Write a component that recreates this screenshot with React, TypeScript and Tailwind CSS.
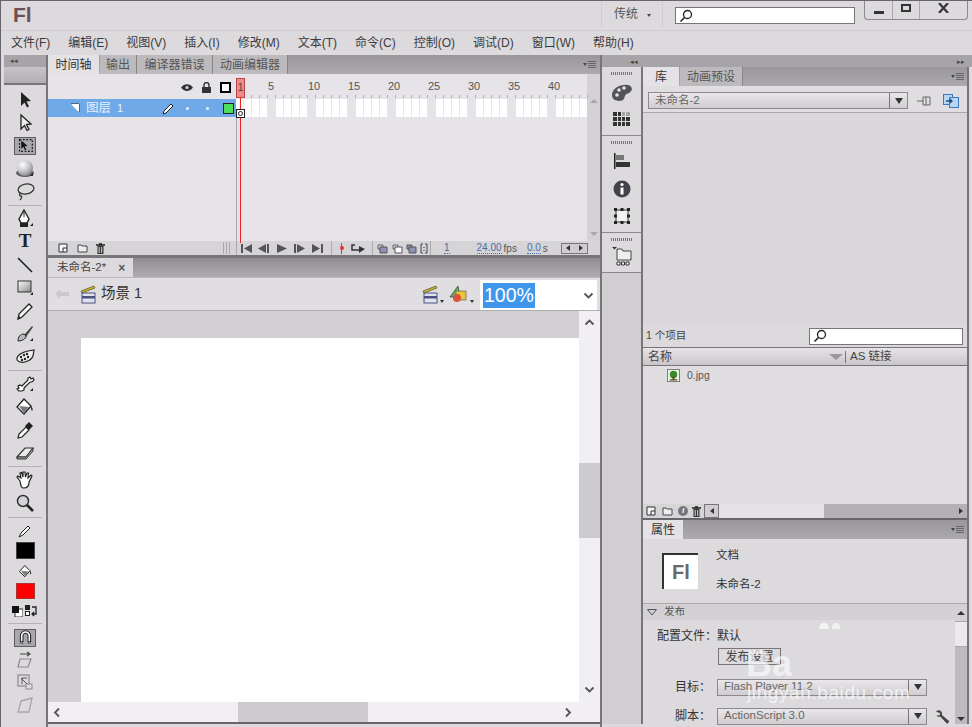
import React from 'react';

const menus = ['文件(F)', '编辑(E)', '视图(V)', '插入(I)', '修改(M)', '文本(T)', '命令(C)', '控制(O)', '调试(D)', '窗口(W)', '帮助(H)'];
const rulerLabels: Record<number, string> = { 1: '1', 5: '5', 10: '10', 15: '15', 20: '20', 25: '25', 30: '30', 35: '35', 40: '40' };
const frames = Array.from({ length: 44 }, (_, i) => i + 1);

const Icon = ({ size = 20, children }: { size?: number; children: React.ReactNode }) => (
  <svg width={size} height={size} viewBox="0 0 20 20" className="shrink-0">{children}</svg>
);

const Corner = () => <path d="M15 17l3 0 0-3z" fill="#222" />;

const toolIcons: Record<string, React.ReactNode> = {
  arrow: <path d="M6 2l0 14 3.5-3.5 2.500 5 2-1-2.500-5 4.500-.5z" fill="#222" />,
  sub: <path d="M6 2l0 14 3.5-3.5 2.500 5 2-1-2.500-5 4.500-.5z" fill="#eee" stroke="#222" strokeWidth="1.3" />,
  free: (
    <>
      <rect x="3" y="3" width="15" height="14" fill="none" stroke="#111" strokeWidth="1.4" strokeDasharray="2 2" />
      <path d="M5 4l0 10 2.500-2.500 2 4 1.500-.8-2-3.800 3.500-.3z" fill="#111" />
    </>
  ),
  sphere: (
    <>
      <defs>
        <radialGradient id="sg" cx=".35" cy=".3" r=".8">
          <stop offset="0" stopColor="#fff" />
          <stop offset=".6" stopColor="#bdbbbf" />
          <stop offset="1" stopColor="#77757a" />
        </radialGradient>
      </defs>
      <ellipse cx="10" cy="14" rx="9" ry="4" fill="#5f5d62" />
      <circle cx="10" cy="9" r="8" fill="url(#sg)" />
      <Corner />
    </>
  ),
  lasso: (
    <>
      <ellipse cx="11" cy="7" rx="8" ry="5" fill="none" stroke="#333" strokeWidth="1.3" transform="rotate(-10 11 7)" />
      <path d="M6 11c-2 1-2 3 0 3 1 0 1 2-1 4" fill="none" stroke="#333" strokeWidth="1.3" />
    </>
  ),
  pen: (
    <>
      <path d="M9 1l5 9-2 4H6l-2-4z" fill="#fff" stroke="#222" strokeWidth="1.4" />
      <path d="M9 2v6" stroke="#222" />
      <rect x="5" y="14" width="8" height="4" fill="#222" />
      <Corner />
    </>
  ),
  line: <path d="M3 3l14 14" stroke="#222" strokeWidth="1.6" />,
  rect: (
    <>
      <defs>
        <linearGradient id="rg" x1="0" y1="0" x2="1" y2="1">
          <stop offset="0" stopColor="#fff" />
          <stop offset="1" stopColor="#8b898d" />
        </linearGradient>
      </defs>
      <rect x="3" y="3" width="13" height="11" fill="url(#rg)" stroke="#333" />
      <Corner />
    </>
  ),
  pencil: (
    <>
      <path d="M3 18l1-5L14 3l3 3L7 16z" fill="#fff" stroke="#222" strokeWidth="1.3" />
      <path d="M3 18l1-3 2 2z" fill="#222" />
    </>
  ),
  brush: (
    <>
      <path d="M9 11L17 2l1 1-7 10z" fill="#444" />
      <path d="M9 10c-4 0-6 3-6 7 4 0 8-2 8-5z" fill="#b9b7ba" stroke="#222" />
      <Corner />
    </>
  ),
  deco: (
    <>
      <path d="M2 13C1 8 8 5 13 4l6-1-1 6c-2 5-12 9-16 4z" fill="#eee" stroke="#222" strokeWidth="1.2" />
      <g fill="#222">
        <circle cx="6" cy="10" r="1.200" />
        <circle cx="9" cy="8" r="1.200" />
        <circle cx="12" cy="7" r="1.200" />
        <circle cx="7" cy="13" r="1.200" />
        <circle cx="10" cy="12" r="1.200" />
        <circle cx="13" cy="10" r="1.200" />
      </g>
    </>
  ),
  bone: (
    <>
      <path d="M4 17l-2-2 2-1-1-2 2-1 2 1 6-6V4l2-1 1 2 2-1 1 2-2 2-2 0-6 6v2l-2 1z" fill="#fff" stroke="#222" strokeWidth="1.2" />
      <path d="M15 17l3 0 0-3z" fill="#222" />
    </>
  ),
  bucket: (
    <>
      <path d="M9 2l7 7-7 8-7-7z" fill="#fff" stroke="#222" strokeWidth="1.3" />
      <path d="M4 9l10 1-5 6z" fill="#7b797d" />
      <path d="M16 9c2 2 2 4 1 5-1-1-1-3-1-5z" fill="#222" />
    </>
  ),
  dropper: (
    <>
      <path d="M3 18l1-4 7-7 3 3-7 7z" fill="#fff" stroke="#222" strokeWidth="1.2" />
      <path d="M10 6l4-4 4 4-4 4z" fill="#222" />
    </>
  ),
  eraser: (
    <>
      <path d="M2 14l8-9h8l-7 9z" fill="#e8e7e9" stroke="#333" strokeWidth="1.2" />
      <path d="M2 14v2h9l7-8V5l-7 9z" fill="#a8a6aa" stroke="#333" />
    </>
  ),
  hand: (
    <path d="M5 11L2 7l1-1 3 2-1-5 1.500-.5L8 7V2h2l.5 5L12 3h1.500l-.5 5 3-3 1 1-3 6c0 4-2 6-5 6-3 0-3-2-4-7z" fill="#fff" stroke="#222" strokeWidth="1.2" />
  ),
  zoom: (
    <>
      <circle cx="8" cy="8" r="5.500" fill="#d5d3d7" stroke="#333" strokeWidth="1.5" />
      <path d="M12 12l6 6" stroke="#222" strokeWidth="2.6" />
    </>
  ),
  magnet: (
    <>
      <path d="M4 15V8a6 6 0 0 1 12 0v7h-3V8a3 3 0 0 0-6 0v7z" fill="#fff" stroke="#222" strokeWidth="1.2" />
      <path d="M4 17h3M13 17h3" stroke="#222" strokeDasharray="1 1" />
    </>
  ),
  smooth: (
    <>
      <path d="M5 9h11l-3 8H3z" fill="none" stroke="#8b898d" strokeWidth="1.2" />
      <path d="M5 4h10m-3-2l3 2-3 2" fill="none" stroke="#444" strokeWidth="1.1" />
    </>
  ),
  scale: (
    <>
      <rect x="3" y="3" width="11" height="11" fill="none" stroke="#8b898d" strokeWidth="1.2" />
      <rect x="11" y="12" width="6" height="5" fill="#dcdadd" stroke="#8b898d" />
      <path d="M6 6l6 6m-5 0V6h5" fill="none" stroke="#555" />
    </>
  ),
  rotate: <path d="M6 6l11-3-3 14H3z" fill="none" stroke="#a8a6aa" strokeWidth="1.3" />,
};

const Tool = ({ name, active, h = 23 }: { name: string; active?: boolean; h?: number }) => (
  <div className="flex items-center justify-center" style={{ height: h }}>
    <div className={`flex h-[18px] w-[22px] items-center justify-center ${active ? 'border border-[#5f5d61] bg-[#a9a7ab]' : ''}`}>
      <Icon size={name === 'free' || name === 'magnet' ? 17 : 20}>{toolIcons[name]}</Icon>
    </div>
  </div>
);

const Sep = ({ h = 4 }: { h?: number }) => (
  <div className="flex items-center" style={{ height: h }}>
    <div className="h-px w-full bg-[#b4b2b6]" />
  </div>
);

const PanelMenu = () => (
  <div className="flex items-center gap-px">
    <div className="h-0 w-0 border-x-[2px] border-t-[3px] border-x-transparent border-t-[#444]" />
    <div className="flex w-[8px] flex-col gap-px">
      <div className="h-px bg-[#666]" />
      <div className="h-px bg-[#666]" />
      <div className="h-px bg-[#666]" />
      <div className="h-px bg-[#666]" />
    </div>
  </div>
);

const Search = ({ className }: { className: string }) => (
  <div className={`flex items-center border border-[#77757a] bg-white pl-[3px] ${className}`}>
    <svg width="14" height="14" viewBox="0 0 14 14">
      <circle cx="8.500" cy="5.500" r="4" fill="none" stroke="#222" strokeWidth="1.3" />
      <path d="M5.500 8.500L1.500 12.500" stroke="#222" strokeWidth="1.6" />
    </svg>
  </div>
);

const DropArrow = () => <div className="h-0 w-0 border-x-[4px] border-t-[6px] border-x-transparent border-t-[#333]" />;

const Combo = ({ text, className }: { text: string; className: string }) => (
  <div className={`flex h-[17px] items-center border border-[#8b898d] bg-linear-to-b from-[#e9e7ea] to-[#cfcdd0] ${className}`}>
    <span className="flex-1 truncate pl-[6px] text-[11.5px] text-[#666]">{text}</span>
    <div className="flex h-full w-[18px] items-center justify-center border-l border-[#77757a]">
      <DropArrow />
    </div>
  </div>
);

const TreeIcon = ({ size = 13 }: { size?: number }) => (
  <svg width={size} height={size} viewBox="0 0 14 14">
    <rect x=".5" y=".5" width="13" height="13" fill="#e9f3df" stroke="#777" />
    <circle cx="7" cy="6" r="4" fill="#3d8a2e" />
    <path d="M6 8h2v3H6zM3 11h8v1.500H3z" fill="#5a4a2a" />
  </svg>
);

const NewLayer = () => (
  <svg width="10" height="10" viewBox="0 0 10 10">
    <path d="M1 1h8v8H1z" fill="#f4f4f4" stroke="#333" />
    <path d="M5 9V5h4" fill="none" stroke="#333" />
  </svg>
);
const FolderSmall = () => (
  <svg width="11" height="10" viewBox="0 0 11 10">
    <path d="M1 9V2h3l1 1h5v6z" fill="#eee" stroke="#444" />
  </svg>
);
const Trash = () => (
  <svg width="9" height="11" viewBox="0 0 9 11">
    <path d="M0 2h9M3 1h3" stroke="#222" strokeWidth="1.3" />
    <path d="M1.500 3h6v8h-6z" fill="#333" />
    <path d="M3.200 4v6M5.700 4v6" stroke="#ddd" />
  </svg>
);

const Clapper = () => (
  <svg width="17" height="19" viewBox="0 0 17 19">
    <path d="M1 6l13-5 1 2L2 8z" fill="#c4b52f" stroke="#5a5320" strokeWidth=".7" />
    <rect x="2" y="8" width="13" height="10" fill="#dfe3ef" stroke="#4a5280" />
    <rect x="2" y="11" width="13" height="2.500" fill="#4a5280" />
  </svg>
);

const PlayBtn = ({ d, ml }: { d: string; ml: string }) => (
  <svg width="11" height="9" viewBox="0 0 11 9" className={ml}>
    <path d={d} fill="#55535a" />
  </svg>
);

const Chevron = ({ d, className }: { d: string; className: string }) => (
  <svg width="11" height="11" viewBox="0 0 11 11" className={className}>
    <path d={d} fill="none" stroke="#55535a" strokeWidth="1.8" />
  </svg>
);

const DockSection = ({ h, children }: { h: number; children: React.ReactNode }) => (
  <div className="flex flex-col items-center border-b border-[#8b898d] pt-[5px]" style={{ height: h }}>
    <div className="mb-[3px] h-[3px] w-[22px] bg-[repeating-linear-gradient(90deg,#77757a_0,#77757a_1px,transparent_1px,transparent_2px)]" />
    {children}
  </div>
);

export default function App() {
  return (
    <div className="relative flex h-[727px] w-[972px] flex-col overflow-hidden border-t border-l border-[#68666c] bg-[#dcdadd] font-['Liberation_Sans','Noto_Sans_CJK_SC',sans-serif] text-[#3c3a3e]">
      {/* タイトルバー */}
      <div className="flex h-[30px] shrink-0 items-start border-b border-[#cfcdd0]">
        <span className="ml-[12px] mt-[2px] text-[21px] leading-[24px] font-bold text-[#6f4f55]">Fl</span>
        <div className="ml-auto flex h-[26px] items-center border-x border-[#cfcdd0] pl-[12px] pr-[11px]">
          <span className="text-[12px] text-[#555]">传统</span>
          <div className="ml-[9px] mt-[2px] h-0 w-0 border-x-[2.5px] border-t-[3px] border-x-transparent border-t-[#444]" />
        </div>
        <Search className="ml-[12px] mt-[6px] h-[17px] w-[180px]" />
        <div className="ml-[9px] mr-[4px] flex h-[19px] w-[104px] rounded-b-[4px] border border-t-0 border-[#8b898d]">
          <div className="flex w-[28px] items-end justify-center border-r border-[#aaa8ac] pb-[5px]">
            <div className="h-[3px] w-[10px] bg-[#333]" />
          </div>
          <div className="flex w-[27px] items-center justify-center border-r border-[#aaa8ac]">
            <div className="mb-[4px] h-[8px] w-[10px] border-2 border-[#333]" />
          </div>
          <div className="flex flex-1 items-center justify-center">
            <svg width="11" height="10" viewBox="0 0 11 10" className="mb-[4px]">
              <path d="M1 0l9 10M10 0L1 10" stroke="#333" strokeWidth="2.2" />
            </svg>
          </div>
        </div>
      </div>

      {/* メニュー */}
      <div className="flex h-[24px] shrink-0 items-center gap-[18px] pl-[10px] text-[12px] text-[#3c3a3e]">
        {menus.map((m) => (
          <span key={m} className="whitespace-nowrap">{m}</span>
        ))}
      </div>

      <div className="flex min-h-0 flex-1">
        {/* ツールバー */}
        <div className="flex w-[47px] shrink-0 flex-col border-r-2 border-[#77757a] pl-[3px]">
          <div className="h-[12px] bg-[#a6a4a8] pl-[6px] text-[7px] leading-[11px] text-[#444]">◂◂</div>
          <div className="h-[16px] bg-linear-to-b from-[#c6c4c7] to-[#b0aeb2]" />
          <div className="flex-1 border-t-2 border-[#77757a] bg-[#dcdadd] px-[4px] pt-[3px]">
            <Tool name="arrow" />
            <Tool name="sub" />
            <Tool name="free" active />
            <Tool name="sphere" />
            <Tool name="lasso" />
            <Sep />
            <Tool name="pen" />
            <div className="flex h-[23px] items-center justify-center font-['Liberation_Serif',serif] text-[19px] font-bold text-[#222]">T</div>
            <Tool name="line" />
            <Tool name="rect" />
            <Tool name="pencil" />
            <Tool name="brush" />
            <Tool name="deco" />
            <Sep />
            <Tool name="bone" />
            <Tool name="bucket" />
            <Tool name="dropper" />
            <Tool name="eraser" />
            <Sep />
            <Tool name="hand" />
            <Tool name="zoom" />
            <Sep h={6} />
            <div className="flex h-[22px] items-center justify-center">
              <svg width="14" height="14" viewBox="0 0 14 14">
                <path d="M1 13l2-4 7-7 2 2-7 7z" fill="#fff" stroke="#222" />
              </svg>
            </div>
            <div className="mx-auto h-[17px] w-[19px] border border-[#444] bg-black" />
            <div className="flex h-[24px] items-center justify-center">
              <Icon size={15}>{toolIcons.bucket}</Icon>
            </div>
            <div className="mx-auto h-[16px] w-[19px] border border-[#a33] bg-[#f00]" />
            <div className="flex h-[21px] items-center justify-center gap-[2px] pt-[3px]">
              <svg width="11" height="11" viewBox="0 0 11 11">
                <rect x="3" y="3" width="8" height="8" fill="#fff" stroke="#333" />
                <rect width="7" height="7" fill="#111" />
              </svg>
              <svg width="13" height="12" viewBox="0 0 13 12">
                <rect width="5" height="5" fill="#222" />
                <rect x=".5" y="6.500" width="4" height="4" fill="#fff" stroke="#222" />
                <path d="M7 2h4v7H7m2-2l-2 2 2 2" fill="none" stroke="#222" strokeWidth="1.3" />
              </svg>
            </div>
            <Sep h={6} />
            <Tool name="magnet" active />
            <Tool name="smooth" h={21} />
            <Tool name="scale" />
            <Tool name="rotate" />
          </div>
        </div>

        {/* 中央 */}
        <div className="flex w-[552px] shrink-0 flex-col">
          <div className="flex h-[19px] shrink-0 items-stretch bg-linear-to-b from-[#99979b] to-[#acaaae] pr-[4px] text-[12px]">
            <div className="flex w-[51px] items-center justify-center bg-[#e4e2e5] text-[#333]">时间轴</div>
            <div className="ml-[1px] flex w-[37px] items-center justify-center border-r border-[#88868a] bg-[#bcbabd] text-[#555]">输出</div>
            <div className="flex w-[76px] items-center justify-center border-r border-[#88868a] bg-[#bcbabd] text-[#555]">编译器错误</div>
            <div className="flex w-[75px] items-center justify-center border-r border-[#88868a] bg-[#bcbabd] text-[#555]">动画编辑器</div>
            <div className="ml-auto flex items-center">
              <PanelMenu />
            </div>
          </div>

          {/* タイムライン */}
          <div className="flex h-[181px] shrink-0 flex-col bg-[#e6e4e8]">
            <div className="flex min-h-0 flex-1">
              <div className="flex w-[539px] shrink-0 flex-col">
                <div className="relative flex h-[25px] shrink-0">
                  <div className="flex w-[188px] shrink-0 items-center justify-end pr-[5px] pt-[2px]">
                    <svg width="12" height="9" viewBox="0 0 12 9" className="mr-[9px]">
                      <path d="M0 4.500C3 0 9 0 12 4.500 9 9 3 9 0 4.500z" fill="#333" />
                      <circle cx="6" cy="4.500" r="1.500" fill="#ddd" />
                    </svg>
                    <svg width="9" height="11" viewBox="0 0 9 11" className="mr-[9px]">
                      <path d="M2 5V3a2.500 2.500 0 0 1 5 0v2" fill="none" stroke="#333" strokeWidth="1.4" />
                      <rect y="5" width="9" height="6" fill="#333" />
                    </svg>
                    <div className="h-[11px] w-[11px] border-2 border-black bg-white" />
                  </div>
                  <div className="flex items-end">
                    {frames.map((f) => (
                      <div key={f} className="relative flex h-full w-[8px] shrink-0 flex-col justify-end">
                        {rulerLabels[f] && f > 1 && (
                          <span className="absolute top-[6px] left-0 whitespace-nowrap text-[11px] leading-[13px] text-[#555]">{rulerLabels[f]}</span>
                        )}
                        <div className="mb-px ml-[7px] h-[3px] w-px bg-[#b0aeb2]" />
                      </div>
                    ))}
                  </div>
                </div>
                <div className="flex h-[18px] shrink-0">
                  <div className="flex w-[188px] shrink-0 items-center bg-[#6fa9e8] text-white">
                    <svg width="9" height="10" viewBox="0 0 9 10" className="ml-[23px]">
                      <path d="M0 1h8v8" fill="#fff" stroke="#222" />
                      <path d="M0 1l8 0 0 8z" fill="#fff" />
                    </svg>
                    <span className="ml-[6px] text-[12.5px] leading-none text-[#e6f1fb]">图层</span>
                    <span className="ml-[6px] text-[11px] leading-none text-[#e6f1fb]">1</span>
                    <svg width="13" height="13" viewBox="0 0 13 13" className="ml-[39px]">
                      <path d="M1 12l1-3 7-7 2 2-7 7z" fill="#fff" stroke="#222" />
                    </svg>
                    <div className="ml-[11px] h-[3px] w-[3px] rounded-full bg-[#e6f1fb]" />
                    <div className="ml-[17px] h-[3px] w-[3px] rounded-full bg-[#e6f1fb]" />
                    <div className="ml-[14px] h-[11px] w-[11px] border border-[#222] bg-[#4fdc5a]" />
                  </div>
                  <div className="flex">
                    {frames.map((f) => (
                      <div key={f} className={`h-full w-[8px] shrink-0 border-r border-[#e8e6ea] ${f % 5 === 0 ? 'bg-[#e6e4e8]' : 'bg-white'}`} />
                    ))}
                  </div>
                </div>
                <div className="w-[189px] flex-1 border-r border-[#a8a6aa]" />
              </div>
              <div className="flex w-[13px] shrink-0 flex-col items-center justify-between bg-[#d4d2d6] pt-[25px] pb-[5px]">
                <div className="h-0 w-0 border-x-[4px] border-b-[4px] border-x-transparent border-b-[#aaa8ac]" />
                <div className="h-0 w-0 border-x-[4px] border-t-[4px] border-x-transparent border-t-[#aaa8ac]" />
              </div>
            </div>
            <div className="flex h-[14px] shrink-0 items-center bg-[#d6d4d7] text-[10px]">
              <div className="ml-[10px]"><NewLayer /></div>
              <div className="ml-[9px]"><FolderSmall /></div>
              <div className="ml-[8px]"><Trash /></div>
              <div className="ml-[118px] h-[12px] w-[8px] bg-[repeating-linear-gradient(90deg,#aaa8ac_0,#aaa8ac_1px,transparent_1px,transparent_3px)]" />
              <div className="ml-[5px] h-full w-px bg-[#aaa8ac]" />
              <PlayBtn ml="ml-[4px]" d="M0 0h2v9H0zM11 0v9L3 4.500z" />
              <PlayBtn ml="ml-[6px]" d="M9 0h2v9H9zM8 0v9L0 4.500z" />
              <PlayBtn ml="ml-[7px]" d="M1 0l10 4.500L1 9z" />
              <PlayBtn ml="ml-[7px]" d="M0 0h2v9H0zM3 0l8 4.500L3 9z" />
              <PlayBtn ml="ml-[7px]" d="M9 0h2v9H9zM0 0l8 4.500L0 9z" />
              <div className="ml-[8px] mr-[6px] h-full w-px bg-[#aaa8ac]" />
              <div className="relative flex h-[11px] w-[7px] items-center justify-center">
                <div className="absolute h-full w-px bg-[#d33]" />
                <div className="h-[4px] w-[4px] rounded-full bg-[#d33]" />
              </div>
              <svg width="16" height="9" viewBox="0 0 16 9" className="ml-[5px]">
                <path d="M5 1H2v5h7" fill="none" stroke="#333" strokeWidth="1.5" />
                <path d="M9 2l6 3-6 4z" fill="#333" />
              </svg>
              <div className="ml-[6px] mr-[3px] h-full w-px bg-[#aaa8ac]" />
              <svg width="52" height="11" viewBox="0 0 52 11">
                <path d="M2 2h5v4H2z" fill="none" stroke="#666" />
                <path d="M4 4h7v6H4z" fill="#8f93b5" stroke="#555" />
                <path d="M17 2h5v4h-5z" fill="none" stroke="#666" />
                <path d="M19 4h7v6h-7z" fill="#fff" stroke="#555" />
                <path d="M31 2h5v4h-5z" fill="#8f93b5" stroke="#555" />
                <path d="M33 4h7v6h-7z" fill="#8f93b5" stroke="#555" />
                <path d="M47 1h-2v9h2M49 1h2v9h-2" fill="none" stroke="#444" />
                <path d="M48 4v1M48 7v1" stroke="#222" />
              </svg>
              <div className="ml-[2px] h-full w-px bg-[#aaa8ac]" />
              <span className="ml-[13px] border-b border-dotted border-[#4a6fa8] leading-[10px] text-[#4a6fa8]">1</span>
              <span className="ml-[27px] border-b border-dotted border-[#4a6fa8] leading-[10px] text-[#4a6fa8]">24.00</span>
              <span className="ml-[2px] text-[#555]">fps</span>
              <span className="ml-[10px] border-b border-dotted border-[#4a6fa8] leading-[10px] text-[#4a6fa8]">0.0</span>
              <span className="ml-[2px] text-[#555]">s</span>
              <div className="ml-[13px] flex h-[11px] w-[27px] items-center justify-between border border-[#77757a] bg-[#cfcdd0] px-[4px]">
                <div className="h-0 w-0 border-y-[3px] border-r-[4px] border-y-transparent border-r-[#333]" />
                <div className="h-0 w-0 border-y-[3px] border-l-[4px] border-y-transparent border-l-[#333]" />
              </div>
            </div>
          </div>

          <div className="h-[3px] shrink-0 bg-[#77757a]" />

          {/* ドキュメントタブ */}
          <div className="flex h-[19px] shrink-0 bg-linear-to-b from-[#8f8d91] to-[#aeacb0]">
            <div className="flex w-[85px] items-center bg-[#dcdadd] pl-[9px] text-[11.5px] text-[#444]">
              <span>未命名-2*</span>
              <span className="ml-[12px] text-[12px] leading-none font-bold text-[#555]">×</span>
            </div>
          </div>

          {/* シーンバー */}
          <div className="flex h-[34px] shrink-0 items-center border-t border-b border-t-[#b9b7ba] border-b-[#b0aeb2] bg-[#e0dee1]">
            <svg width="14" height="10" viewBox="0 0 14 10" className="ml-[7px]">
              <path d="M0 5l5-5v3h9v4H5v3z" fill="#cbc9cc" />
            </svg>
            <div className="ml-[11px]"><Clapper /></div>
            <span className="ml-[4px] text-[14.5px] text-[#333]">场景 1</span>
            <div className="ml-auto flex items-center">
              <Clapper />
              <div className="mt-[14px] ml-px h-0 w-0 border-x-[2.5px] border-t-[3px] border-x-transparent border-t-[#333]" />
              <svg width="20" height="18" viewBox="0 0 20 18" className="ml-[5px]">
                <path d="M9 1L1 12h10z" fill="#5cb85c" stroke="#333" strokeWidth=".7" />
                <rect x="7" y="6" width="10" height="9" fill="#e8c43a" stroke="#665" strokeWidth=".7" />
                <circle cx="8" cy="13" r="4" fill="#d9533a" />
              </svg>
              <div className="mt-[14px] ml-px h-0 w-0 border-x-[2.5px] border-t-[3px] border-x-transparent border-t-[#333]" />
              <div className="mt-[2px] ml-[6px] mr-[3px] flex h-[30px] w-[117px] items-center bg-white pl-[3px]">
                <span className="bg-[#3f97ec] px-px text-[19.5px] leading-[25px] text-white">100%</span>
                <Chevron d="M1.500 3.500l4 4 4-4" className="ml-auto mr-[3px]" />
              </div>
            </div>
          </div>

          {/* ステージ */}
          <div className="flex min-h-0 flex-1">
            <div className="flex w-[531px] shrink-0 flex-col bg-[#d2d0d3] pt-[27px] pl-[33px]">
              <div className="flex-1 bg-white" />
            </div>
            <div className="flex flex-1 flex-col items-center bg-[#f1eff3] pt-[6px] pb-[7px]">
              <Chevron d="M1.500 7.500l4-4 4 4" className="" />
              <div className="mt-[135px] h-[75px] w-full bg-[#cdcbd0]" />
              <Chevron d="M1.500 3.500l4 4 4-4" className="mt-auto" />
            </div>
          </div>
          <div className="flex h-[20px] shrink-0 items-center bg-[#f1eff3]">
            <Chevron d="M7 1.500l-4 4 4 4" className="ml-[4px]" />
            <div className="ml-[175px] h-full w-[130px] bg-[#cdcbd0]" />
            <Chevron d="M4 1.500l4 4-4 4" className="ml-[194px]" />
          </div>
          <div className="h-[2px] shrink-0 bg-[#68666c]" />
          <div className="h-[3px] shrink-0" />
        </div>

        {/* 右側 */}
        <div className="flex min-w-0 flex-1 flex-col border-l-2 border-[#77757a]">
          <div className="flex h-[12px] shrink-0 items-center justify-between bg-[#a6a4a8] pl-[28px] pr-[7px] text-[7px] leading-none text-[#444]">
            <span>◂◂</span>
            <span>▸▸</span>
          </div>
          <div className="flex min-h-0 flex-1 pb-[3px] pr-[3px]">
            {/* ドック */}
            <div className="flex w-[41px] shrink-0 flex-col border-r-2 border-[#77757a]">
              <DockSection h={69}>
                <svg width="22" height="20" viewBox="0 0 22 20" className="mt-[5px]">
                  <path d="M1 12C1 5 10 1 17 2c5 1 5 6 1 8-4 1-4 3-5 6-2 3-12 3-12-4z" fill="#55535a" />
                  <circle cx="6" cy="12" r="1.800" fill="#e4e2e5" />
                  <circle cx="8" cy="7" r="1.800" fill="#e4e2e5" />
                  <circle cx="13" cy="5" r="1.800" fill="#e4e2e5" />
                </svg>
                <svg width="17" height="14" viewBox="0 0 17 14" className="mt-[9px]">
                  <rect width="17" height="14" fill="#333" />
                  <path d="M0 4.500h17M0 9.500h17M4.500 0v14M8.500 0v14M12.500 0v14" stroke="#dcdadd" />
                  <rect x="9" y="0" width="8" height="5" fill="#eee" opacity=".6" />
                </svg>
              </DockSection>
              <DockSection h={97}>
                <svg width="16" height="16" viewBox="0 0 16 16" className="mt-[6px]">
                  <rect y="0" width="1.500" height="16" fill="#222" />
                  <rect x="2" y="2" width="8" height="5" fill="#777" />
                  <rect x="2" y="9" width="14" height="5" fill="#333" />
                </svg>
                <svg width="18" height="18" viewBox="0 0 18 18" className="mt-[11px]">
                  <circle cx="9" cy="9" r="8.500" fill="#44424a" />
                  <circle cx="9" cy="4.500" r="1.600" fill="#fff" />
                  <rect x="7.500" y="7.500" width="3" height="7" fill="#fff" />
                </svg>
                <svg width="16" height="16" viewBox="0 0 16 16" className="mt-[10px]">
                  <rect x="2" y="2" width="12" height="12" fill="#f2f1f3" stroke="#333" />
                  <path d="M0 0h3v3H0zM13 0h3v3h-3zM0 13h3v3H0zM13 13h3v3h-3zM6.500 0h3v3h-3zM6.500 13h3v3h-3zM0 6.500h3v3H0zM13 6.500h3v3h-3z" fill="#222" />
                </svg>
              </DockSection>
              <DockSection h={40}>
                <svg width="22" height="20" viewBox="0 0 22 20" className="mt-[2px]">
                  <path d="M1 1h5l-2.500 2.500z" fill="#333" />
                  <path d="M6 3h5l1 2h8v9H6z" fill="#eee" stroke="#444" />
                  <path d="M6 16h3v3H6zM10.500 16h3v3h-3zM15 16h3v3h-3z" fill="#fff" stroke="#333" />
                </svg>
              </DockSection>
              <div className="flex-1 bg-[#d0ced1]" />
            </div>

            {/* パネル */}
            <div className="flex min-w-0 flex-1 flex-col border-r-2 border-[#77757a]">
              <div className="flex h-[19px] shrink-0 items-stretch bg-linear-to-b from-[#99979b] to-[#acaaae] pr-[3px] text-[12px]">
                <div className="flex w-[36px] items-center justify-center bg-[#e4e2e5] text-[#333]">库</div>
                <div className="ml-[1px] flex w-[63px] items-center justify-center border-r border-[#88868a] bg-[#bcbabd] text-[#555]">动画预设</div>
                <div className="ml-auto flex items-center"><PanelMenu /></div>
              </div>
              <div className="flex h-[27px] shrink-0 items-start border-b border-[#aaa8ac] bg-[#e0dee1] pt-[6px] pl-[5px]">
                <Combo text="未命名-2" className="w-[260px]" />
                <svg width="16" height="14" viewBox="0 0 16 14" className="mt-[2px] ml-[9px]">
                  <path d="M0 7h6M6 3v8M6 3h7v8H6M9 3v8" fill="none" stroke="#666" />
                </svg>
                <svg width="16" height="14" viewBox="0 0 16 14" className="mt-[2px] ml-[10px]">
                  <rect x=".5" y=".5" width="9" height="10" fill="#bcd6f0" stroke="#3a78c0" />
                  <rect x="6.500" y="3.500" width="9" height="10" fill="#bcd6f0" stroke="#3a78c0" />
                  <path d="M3 7h6m-2-2l2 2-2 2" fill="none" stroke="#1a4f90" strokeWidth="1.3" />
                </svg>
              </div>
              <div className="h-[212px] shrink-0 bg-[#d9d7da]" />
              <div className="flex h-[22px] shrink-0 items-center bg-[#dcdadd] pl-[3px]">
                <span className="text-[10.5px] text-[#444]">1 个项目</span>
                <Search className="ml-auto mr-[4px] h-[17px] w-[154px]" />
              </div>
              <div className="flex h-[19px] shrink-0 items-center border-y border-y-[#77757a] bg-linear-to-b from-[#e6e4e7] to-[#c9c7ca] pl-[5px] text-[12px] text-[#444]">
                <span className="w-[181px]">名称</span>
                <div className="h-0 w-0 border-x-[7px] border-t-[6px] border-x-transparent border-t-[#99979b]" />
                <div className="ml-[2px] h-[12px] w-px bg-[#77757a]" />
                <span className="ml-[4px] text-[11.5px]">AS 链接</span>
              </div>
              <div className="flex h-[138px] shrink-0 items-start bg-[#dfdde0] pt-[3px] pl-[24px]">
                <TreeIcon />
                <span className="ml-[7px] text-[10.5px] leading-[13px] text-[#555]">0.jpg</span>
              </div>
              <div className="flex h-[14px] shrink-0 items-center bg-[#d6d4d7] pl-[3px]">
                <NewLayer />
                <div className="ml-[6px]"><FolderSmall /></div>
                <div className="ml-[5px] flex h-[10px] w-[10px] items-center justify-center rounded-full bg-[#77757a] text-[8px] leading-none font-bold text-white italic">i</div>
                <div className="ml-[4px]"><Trash /></div>
                <div className="ml-[3px] flex h-full flex-1 items-stretch bg-[#b3b1b5]">
                  <div className="flex w-[15px] items-center justify-center border border-[#77757a] bg-[#cfcdd0]">
                    <div className="h-0 w-0 border-y-[3px] border-r-[4px] border-y-transparent border-r-[#333]" />
                  </div>
                  <div className="w-[105px] bg-[#e4e2e5]" />
                  <div className="ml-auto flex w-[12px] items-center justify-center">
                    <div className="h-0 w-0 border-y-[3px] border-l-[4px] border-y-transparent border-l-[#333]" />
                  </div>
                </div>
              </div>
              <div className="h-[2px] shrink-0 bg-[#68666c]" />
              <div className="flex h-[19px] shrink-0 items-stretch bg-linear-to-b from-[#99979b] to-[#acaaae] pr-[3px] text-[12px]">
                <div className="flex w-[40px] items-center justify-center bg-[#e4e2e5] text-[#333]">属性</div>
                <div className="ml-auto flex items-center"><PanelMenu /></div>
              </div>
              <div className="flex h-[64px] shrink-0 bg-[#dcdadd] pt-[14px] pl-[19px]">
                <div className="flex h-[36px] w-[36px] items-center justify-center border-t-2 border-l-2 border-[#333] bg-white text-[20px] leading-none font-bold text-[#6b696d]">Fl</div>
                <div className="ml-[18px] -mt-[6px] flex h-[46px] flex-col justify-between text-[11.5px] text-[#333]">
                  <span>文档</span>
                  <span>未命名-2</span>
                </div>
              </div>
              <div className="flex min-h-0 flex-1 border-t border-[#aaa8ac]">
                <div className="flex min-w-0 flex-1 flex-col bg-[#dcdadd]">
                  <div className="flex h-[16px] shrink-0 items-center bg-[#d3d1d4] pl-[4px] text-[10.5px] text-[#555]">
                    <svg width="10" height="7" viewBox="0 0 10 7"><path d="M.5.5h9L5 6z" fill="none" stroke="#555" /></svg>
                    <span className="ml-[7px]">发布</span>
                  </div>
                  <div className="mt-[8px] flex items-center text-[12px] leading-[16px] text-[#333]">
                    <span className="w-[74px] whitespace-nowrap pl-[14px]">配置文件：</span>
                    <span>默认</span>
                  </div>
                  <div className="ml-[75px] mt-[4px] flex h-[17px] w-[63px] items-center justify-center border border-[#77757a] bg-[#dcdadd] text-[12px] text-[#444]">发布设置</div>
                  <div className="mt-[6px] h-px bg-[#b9b7ba]" />
                  <div className="mt-[7px] flex items-center text-[12px] text-[#333]">
                    <span className="w-[70px] pr-[2px] text-right">目标：</span>
                    <Combo text="Flash Player 11.2" className="ml-[4px] w-[210px]" />
                  </div>
                  <div className="mt-[11px] flex items-center text-[12px] text-[#333]">
                    <span className="w-[70px] pr-[2px] text-right">脚本：</span>
                    <Combo text="ActionScript 3.0" className="ml-[4px] w-[210px]" />
                    <svg width="15" height="15" viewBox="0 0 14 14" className="ml-[8px]">
                      <path d="M1 2.500a3.500 3.500 0 0 1 5 0c.7 1 .8 2 .4 3l7 6-2 2.500-6.500-7c-1.500.5-3 0-3.500-1L4 6 5 4 2.500 3z" fill="#444" />
                    </svg>
                  </div>
                </div>
                <div className="flex w-[12px] shrink-0 flex-col bg-[#bdbbbe]">
                  <div className="flex h-[17px] items-center justify-center bg-[#d3d1d4]">
                    <div className="h-0 w-0 border-x-[4px] border-b-[4px] border-x-transparent border-b-[#333]" />
                  </div>
                  <div className="h-[26px] border-y border-[#aaa8ac] bg-[#ebe9ec]" />
                  <div className="mt-auto mb-[3px] flex justify-center">
                    <div className="h-0 w-0 border-x-[4px] border-t-[4px] border-x-transparent border-t-[#333]" />
                  </div>
                </div>
              </div>
            </div>
          </div>
        </div>
      </div>

      {/* 透かし */}
      <div className="pointer-events-none absolute top-[645px] left-[745px] text-[36px] leading-[36px] font-bold text-white/60">Ba</div>
      <div className="pointer-events-none absolute top-[681px] left-[746px] text-[19px] leading-[22px] tracking-[0.6px] text-white/70">jingyan.baidu.com</div>
      <div className="pointer-events-none absolute top-[622px] left-[818px] flex gap-[3px]">
        <div className="h-[6px] w-[10px] rounded-t-full bg-white/70" />
        <div className="h-[6px] w-[8px] rounded-t-full bg-white/60" />
      </div>

      {/* プレイヘッド */}
      <div className="absolute top-[77px] left-[235px] flex h-[165px] w-[9px] flex-col items-center">
        <div className="flex h-[20px] w-[9px] shrink-0 items-center justify-center border border-[#b44] bg-[#f08a8a] text-[10px] leading-none text-[#444]">1</div>
        <div className="relative w-px flex-1 bg-[#e22]">
          <div className="absolute top-[11px] -left-[4px] flex h-[9px] w-[9px] items-center justify-center border border-[#222] bg-white">
            <div className="h-[5px] w-[5px] rounded-full border border-[#222]" />
          </div>
        </div>
      </div>
    </div>
  );
}
